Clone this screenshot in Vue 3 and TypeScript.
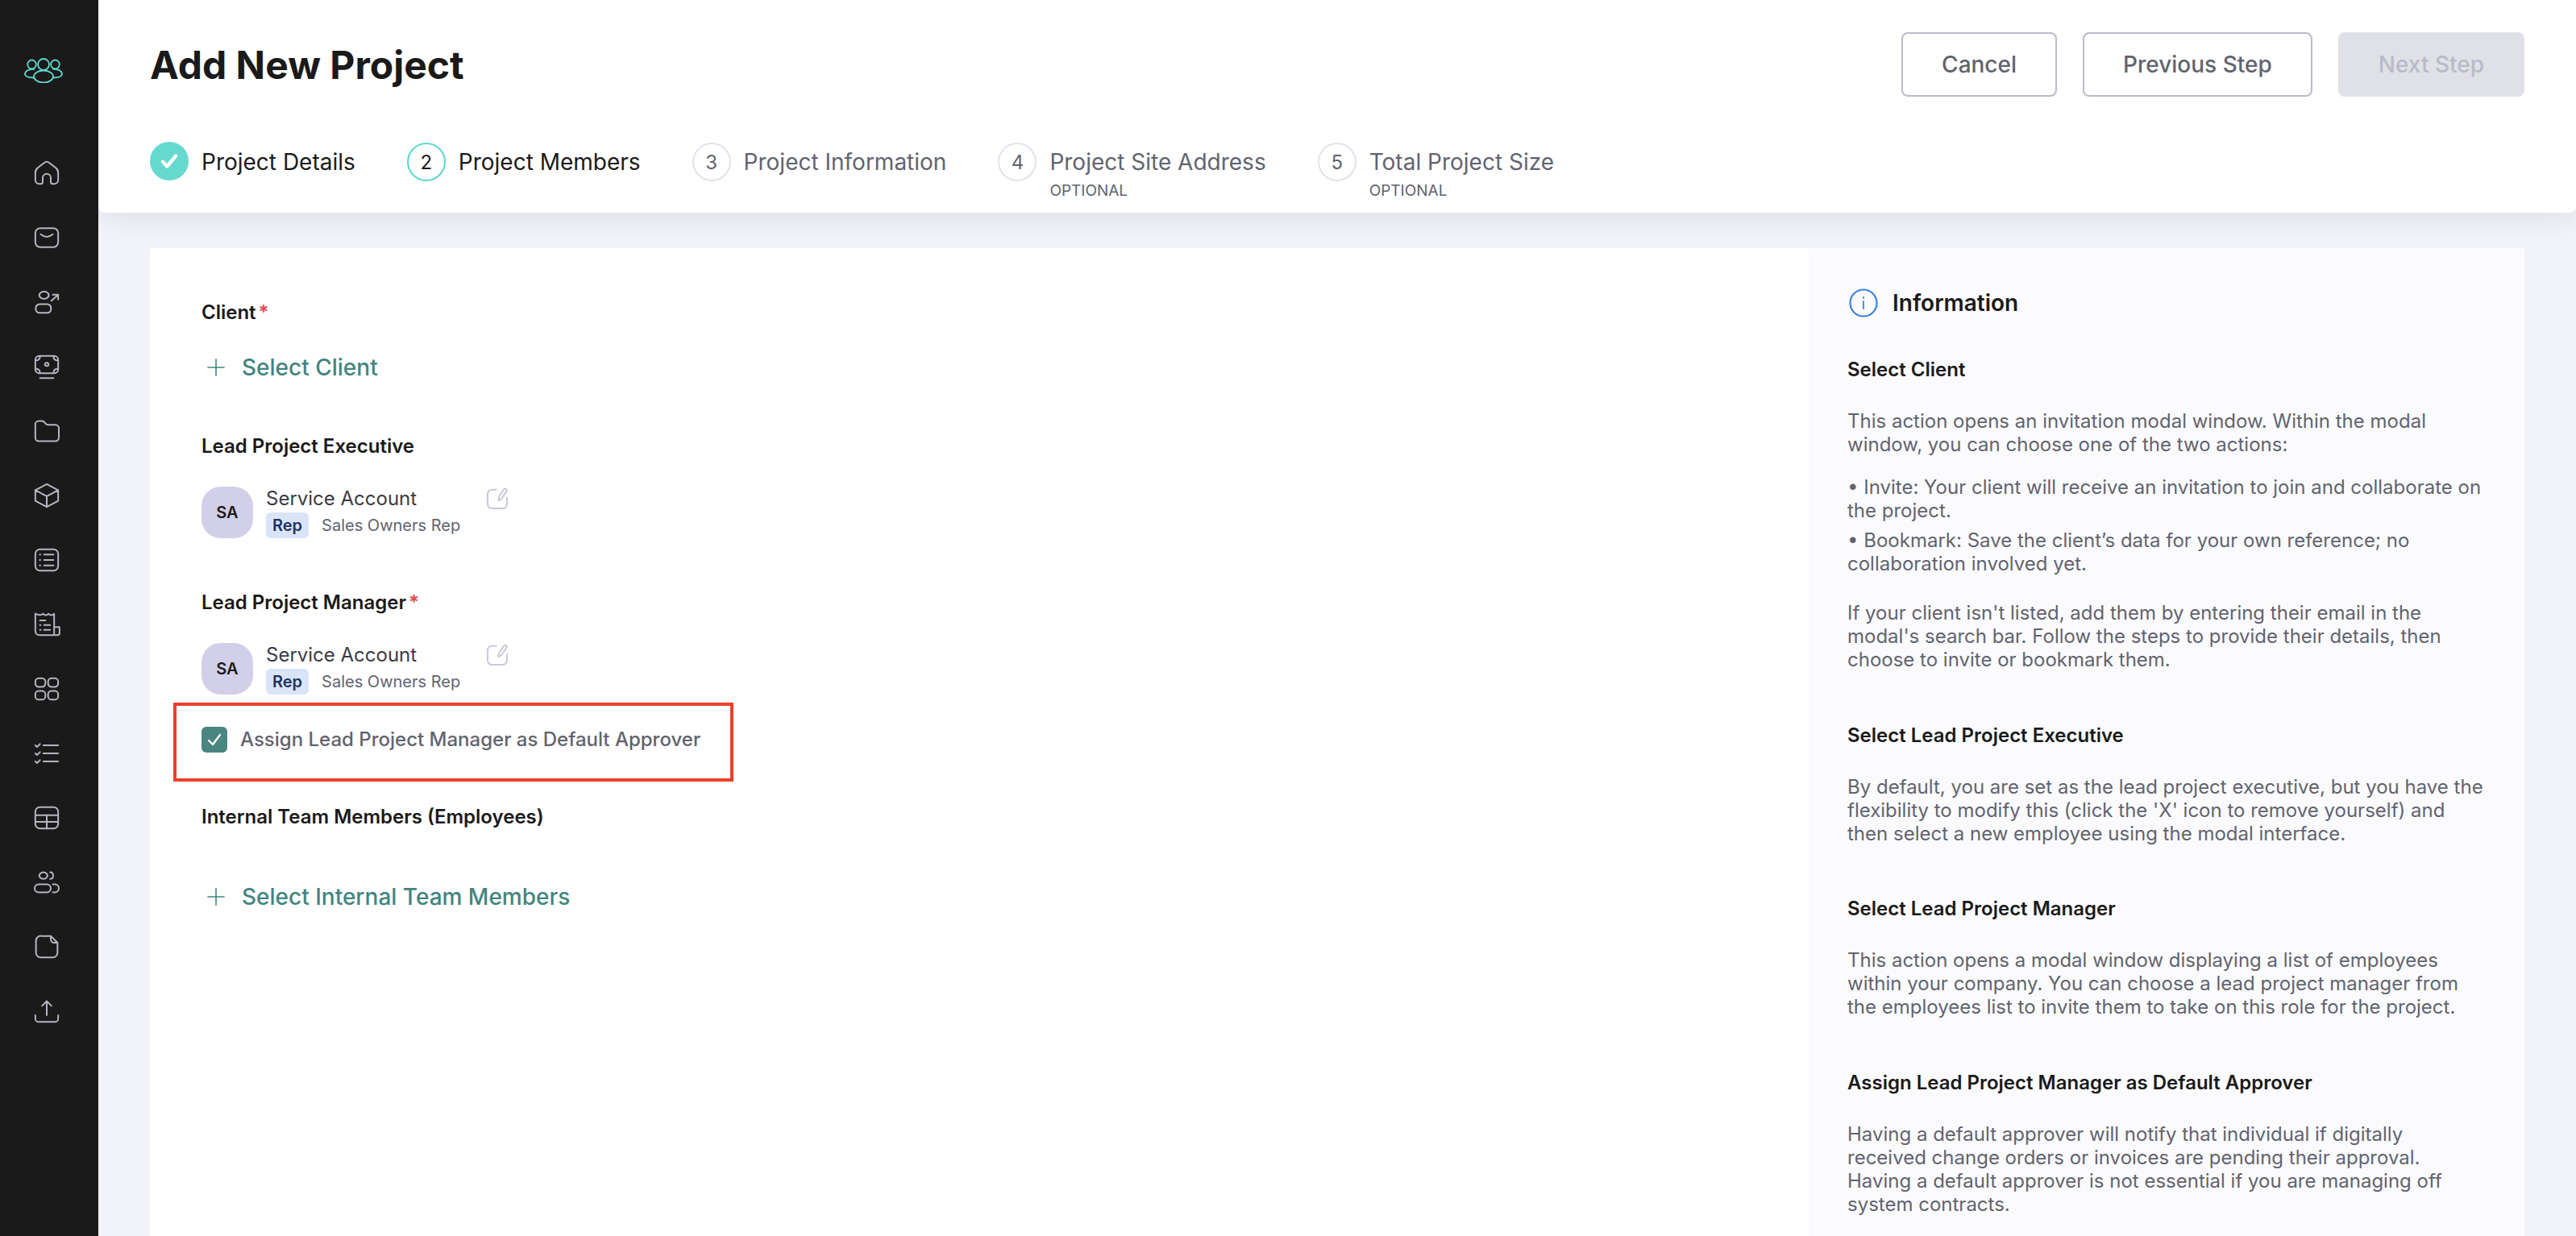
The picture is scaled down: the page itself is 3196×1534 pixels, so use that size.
<script setup lang="ts">
const navIcons: string[] = [
  'M3.500 11.500c0-1.500.6-2.600 1.800-3.500L10 4.300a3.200 3.200 0 0 1 4 0L18.700 8c1.200.9 1.800 2 1.800 3.500v5.500a3 3 0 0 1-3 3h-1A1.500 1.500 0 0 1 15 18.500v-3a3 3 0 0 0-6 0v3A1.500 1.500 0 0 1 7.500 20h-1a3 3 0 0 1-3-3z',
  'M7 5h10a3.500 3.500 0 0 1 3.500 3.500v7A3.500 3.500 0 0 1 17 19H7a3.500 3.500 0 0 1-3.500-3.500v-7A3.500 3.500 0 0 1 7 5zM7.500 9.500c3 2.500 6 2.500 9 0',
  'M10 4a3.500 2.800 0 1 0 .01 0zM6.500 13.500h6a3.300 3.300 0 0 1 0 6.500h-6a3.300 3.300 0 0 1 0-6.500zM15.500 11l5-4.500M16.500 6.500h4V10',
  'M6.500 4h11a3 3 0 0 1 3 3v7a3 3 0 0 1-3 3h-11a3 3 0 0 1-3-3V7a3 3 0 0 1 3-3zM3.500 7.500C6 7.500 7 6.500 7 4.200M20.500 7.500C18 7.500 17 6.500 17 4.200M3.500 13.500c2.500 0 3.500 1 3.500 3.300M20.500 13.500c-2.500 0-3.500 1-3.500 3.300M12 9.200a1.400 1.200 0 1 0 .01 0zM7 20.500h10',
  'M3.500 7A2.500 2.500 0 0 1 6 4.500h2.500c1 0 1.500.5 2 1.200l.7.8c.5.600 1 .8 1.800.8h5.500A2.500 2.500 0 0 1 21 9.800V17a2.500 2.500 0 0 1-2.500 2.500h-12.500A2.500 2.500 0 0 1 3.500 17z',
  'M12 3.500 20.500 8v8L12 20.500 3.500 16V8zM3.500 8 12 12.500 20.500 8M12 12.500v8',
  'M7 4h10a3.500 3.500 0 0 1 3.500 3.500v9A3.500 3.500 0 0 1 17 20H7a3.500 3.500 0 0 1-3.500-3.500v-9A3.500 3.500 0 0 1 7 4zM10 8h7M10 12h7M10 16h7M6.800 8h.4M6.800 12h.4M6.800 16h.4',
  'M17.500 20V4c-1.500 1.500-3 1.500-4.200 0-1.300 1.500-2.700 1.500-4 0-1.300 1.500-2.800 1.500-5.800 0v13a3 3 0 0 0 3 3h13.500a1.500 1.500 0 0 0 1.500-1.500V14h-3M7 9h4M7 12.500h.4M10 12.500h4.500M7 16h.4M10 16h4.500',
  'M6 4h2.500A2.500 2.500 0 0 1 11 6.500V8a2.500 2.500 0 0 1-2.500 2.500H6A2.500 2.500 0 0 1 3.500 8V6.500A2.500 2.500 0 0 1 6 4zM15.500 4H18a2.500 2.500 0 0 1 2.500 2.500V8A2.500 2.500 0 0 1 18 10.500h-2.500A2.500 2.500 0 0 1 13 8V6.500A2.500 2.500 0 0 1 15.500 4zM6 13.500h2.500A2.500 2.500 0 0 1 11 16v1.500A2.500 2.500 0 0 1 8.500 20H6a2.500 2.500 0 0 1-2.500-2.500V16A2.500 2.500 0 0 1 6 13.500zM15.500 13.500H18a2.500 2.500 0 0 1 2.500 2.500v1.500A2.500 2.500 0 0 1 18 20h-2.500a2.500 2.500 0 0 1-2.500-2.500V16a2.500 2.500 0 0 1 2.500-2.500z',
  'M9.500 6h11M9.500 12h11M9.500 18h11M3.500 6l1.300 1.200L7 5M3.500 12l1.300 1.200L7 11M3.500 18l1.300 1.200L7 17',
  'M7 4h10a3.500 3.500 0 0 1 3.500 3.500v9A3.500 3.500 0 0 1 17 20H7a3.500 3.500 0 0 1-3.500-3.500v-9A3.500 3.500 0 0 1 7 4zM3.500 10h17M3.500 15h17M12 10v10',
  'M9.500 4.500a3 2.500 0 1 0 .01 0zM14.500 4.500c3 0 3 5 0 5M6 13.500h6a3 3 0 0 1 0 6H6a3 3 0 0 1 0-6zM16.500 13.500h1.500a3 3 0 0 1 0 6h-1.500',
  'M8 4h7l5 5v7.500a3.500 3.500 0 0 1-3.500 3.500h-9A3.500 3.500 0 0 1 4 16.500v-9A3.500 3.500 0 0 1 8 4zM15 4v2.500A2.500 2.500 0 0 0 17.500 9H20',
  'M12 15V5M8.500 8 12 4.500 15.500 8M3.500 15v2.500A2.500 2.500 0 0 0 6 20h12a2.500 2.500 0 0 0 2.500-2.500V15'
]

const steps = [
  { num: 2, title: 'Project Members', sub: '', active: true },
  { num: 3, title: 'Project Information', sub: '', active: false },
  { num: 4, title: 'Project Site Address', sub: 'OPTIONAL', active: false },
  { num: 5, title: 'Total Project Size', sub: 'OPTIONAL', active: false }
]

const info = [
  {
    title: 'Select Client',
    paras: [
      { text: 'This action opens an invitation modal window. Within the modal window, you can choose one of the two actions:', after: 24 },
      { text: '• Invite: Your client will receive an invitation to join and collaborate on the project.', after: 8 },
      { text: '• Bookmark: Save the client’s data for your own reference; no collaboration involved yet.', after: 32 },
      { text: "If your client isn't listed, add them by entering their email in the modal's search bar. Follow the steps to provide their details, then choose to invite or bookmark them.", after: 0 }
    ]
  },
  {
    title: 'Select Lead Project Executive',
    paras: [
      { text: "By default, you are set as the lead project executive, but you have the flexibility to modify this (click the 'X' icon to remove yourself) and then select a new employee using the modal interface.", after: 0 }
    ]
  },
  {
    title: 'Select Lead Project Manager',
    paras: [
      { text: 'This action opens a modal window displaying a list of employees within your company. You can choose a lead project manager from the employees list to invite them to take on this role for the project.', after: 0 }
    ]
  },
  {
    title: 'Assign Lead Project Manager as Default Approver',
    paras: [
      { text: 'Having a default approver will notify that individual if digitally received change orders or invoices are pending their approval. Having a default approver is not essential if you are managing off system contracts.', after: 0 }
    ]
  }
]
</script>

<template>
  <div class="page">
    <aside class="sidebar">
      <svg class="logo" viewBox="0 0 48 32" fill="none" stroke="#5fd8cc" stroke-width="1.800">
        <circle cx="24" cy="9" r="7" />
        <ellipse cx="24" cy="24" rx="12" ry="7.500" />
        <ellipse cx="9.500" cy="9" rx="5.300" ry="5.500" />
        <ellipse cx="38.500" cy="9" rx="5.300" ry="5.500" />
        <path d="M13 14.500C6 14.500 1 17 1 21c0 3 4 4.500 12 4.500M35 14.500c7 0 12 2.500 12 6.500 0 3-4 4.500-12 4.500" />
      </svg>
      <nav class="nav">
        <svg v-for="(d, i) in navIcons" :key="i" class="nav-icon" viewBox="0 0 24 24" fill="none" stroke="#b4b6c0" stroke-width="1.200" stroke-linecap="round" stroke-linejoin="round">
          <path :d="d" />
        </svg>
      </nav>
    </aside>

    <div class="main">
      <header class="header">
        <div class="top-row">
          <h1 class="title">Add New Project</h1>
          <div class="actions">
            <button class="btn">Cancel</button>
            <button class="btn">Previous Step</button>
            <button class="btn disabled">Next Step</button>
          </div>
        </div>
        <div class="steps">
          <div class="step">
            <span class="dot done">
              <svg width="26" height="26" viewBox="0 0 24 24" fill="none" stroke="#fff" stroke-width="4" stroke-linecap="round" stroke-linejoin="round"><path d="M4.500 12.500 9.500 18 19.500 6" /></svg>
            </span>
            <span class="step-title current">Project Details</span>
          </div>
          <div v-for="s in steps" :key="s.num" class="step">
            <span class="dot" :class="{ active: s.active }">{{ s.num }}</span>
            <div class="step-text">
              <span class="step-title" :class="{ current: s.active }">{{ s.title }}</span>
              <span v-if="s.sub" class="step-sub">{{ s.sub }}</span>
            </div>
          </div>
        </div>
      </header>

      <div class="content">
        <section class="form">
          <div class="field">
            <div class="label">Client<span class="req">*</span></div>
            <a class="add">
              <svg class="plus" viewBox="0 0 24 24" fill="none" stroke="#43857f" stroke-width="1.200"><path d="M12 4v16M4 12h16" /></svg>
              Select Client
            </a>
          </div>

          <div class="field">
            <div class="label">Lead Project Executive</div>
            <div class="member">
              <div class="avatar">SA</div>
              <div class="member-info">
                <div class="member-name">Service Account</div>
                <div class="member-role"><span class="tag">Rep</span><span class="role">Sales Owners Rep</span></div>
              </div>
              <svg class="edit" viewBox="0 0 24 24" fill="none" stroke="#c9cad6" stroke-width="1.500" stroke-linecap="round" stroke-linejoin="round">
                <path d="M11 3.500H7a4 4 0 0 0-4 4V17a4 4 0 0 0 4 4h10a4 4 0 0 0 4-4v-6M13 13.500l.3-3L18 3.500a1.500 1.500 0 0 1 2.600 1.500l-4.700 7z" />
              </svg>
            </div>
          </div>

          <div class="field">
            <div class="label">Lead Project Manager<span class="req">*</span></div>
            <div class="member">
              <div class="avatar">SA</div>
              <div class="member-info">
                <div class="member-name">Service Account</div>
                <div class="member-role"><span class="tag">Rep</span><span class="role">Sales Owners Rep</span></div>
              </div>
              <svg class="edit" viewBox="0 0 24 24" fill="none" stroke="#c9cad6" stroke-width="1.500" stroke-linecap="round" stroke-linejoin="round">
                <path d="M11 3.500H7a4 4 0 0 0-4 4V17a4 4 0 0 0 4 4h10a4 4 0 0 0 4-4v-6M13 13.500l.3-3L18 3.500a1.500 1.500 0 0 1 2.600 1.500l-4.700 7z" />
              </svg>
            </div>
            <div class="approver">
              <span class="checkbox">
                <svg width="24" height="24" viewBox="0 0 24 24" fill="none" stroke="#fff" stroke-width="2.400" stroke-linecap="round" stroke-linejoin="round"><path d="M5 13 10 18 19 6" /></svg>
              </span>
              <span class="approver-text">Assign Lead Project Manager as Default Approver</span>
              <div class="highlight"></div>
            </div>
          </div>

          <div class="field team">
            <div class="label">Internal Team Members (Employees)</div>
            <a class="add">
              <svg class="plus" viewBox="0 0 24 24" fill="none" stroke="#43857f" stroke-width="1.200"><path d="M12 4v16M4 12h16" /></svg>
              Select Internal Team Members
            </a>
          </div>
        </section>

        <aside class="info">
          <div class="info-head">
            <svg width="36" height="36" viewBox="0 0 36 36" fill="none" stroke="#3b82e0" stroke-width="2.200" stroke-linecap="round">
              <circle cx="18" cy="18" r="16.500" />
              <path d="M18 16v9" stroke-width="1.800" />
              <path d="M18 11v.6" stroke-width="2.200" />
            </svg>
            <span>Information</span>
          </div>
          <div v-for="block in info" :key="block.title" class="info-block">
            <h3>{{ block.title }}</h3>
            <p v-for="(p, i) in block.paras" :key="i" :style="{ marginBottom: p.after + 'px' }">{{ p.text }}</p>
          </div>
        </aside>
      </div>
    </div>
  </div>
</template>

<style>
html, body {
  margin: 0;
  height: 100%;
  overflow: hidden;
  background: #f2f3f8;
}
</style>

<style scoped>
.page {
  display: flex;
  height: 1534px;
  overflow: hidden;
  font-family: Inter, "Liberation Sans", sans-serif;
  color: #1a1a1a;
}

.sidebar {
  width: 122px;
  flex: none;
  background: #1a1a1a;
  display: flex;
  flex-direction: column;
  align-items: flex-start;
}

.logo {
  width: 48px;
  height: 32px;
  margin: 71px 0 0 30px;
}

.nav {
  display: flex;
  flex-direction: column;
  gap: 40px;
  margin: 92px 0 0 38px;
}

.nav-icon {
  width: 40px;
  height: 40px;
  display: block;
}

.main {
  flex: 1;
  min-width: 0;
  display: flex;
  flex-direction: column;
}

.header {
  height: 264px;
  flex: none;
  background: #fff;
  padding: 0 64px;
  box-sizing: border-box;
  border-radius: 0 0 8px 8px;
  box-shadow: 0 4px 32px rgba(30, 30, 60, 0.1);
  position: relative;
}

.top-row {
  display: flex;
  align-items: center;
  justify-content: space-between;
  height: 160px;
}

.title {
  margin: 0;
  font-size: 48px;
  font-weight: 700;
}

.actions {
  display: flex;
  gap: 32px;
}

.btn {
  height: 80px;
  box-sizing: border-box;
  padding: 0 48px;
  background: #fff;
  border: 2px solid #b9bbc9;
  border-radius: 8px;
  font-family: inherit;
  font-size: 28px;
  font-weight: 500;
  color: #62636e;
}

.btn.disabled {
  background: #e0e1e7;
  border-color: #e0e1e7;
  color: #b9bbc9;
}

.steps {
  display: flex;
  gap: 64px;
  margin-top: 17px;
}

.step {
  display: flex;
  gap: 16px;
}

.dot {
  width: 48px;
  height: 48px;
  box-sizing: border-box;
  flex: none;
  border-radius: 50%;
  border: 2px solid #e2e3ea;
  display: flex;
  align-items: center;
  justify-content: center;
  font-size: 24px;
  color: #62636e;
}

.dot.active {
  border-color: #5fd8cc;
  color: #1a1a1a;
}

.dot.done {
  background: #66d9cf;
  border-color: #66d9cf;
  margin-top: -1px;
}

.step-text {
  display: flex;
  flex-direction: column;
}

.step-title {
  font-size: 28px;
  line-height: 48px;
  color: #62636e;
  white-space: nowrap;
}

.step-title.current {
  color: #1a1a1a;
}

.step-sub {
  font-size: 19px;
  line-height: 24px;
  color: #62636e;
}

.content {
  flex: 1;
  min-height: 0;
  display: flex;
  padding: 44px 64px 0;
}

.form {
  flex: 1;
  min-width: 0;
  background: #fff;
  padding: 64px 64px 0;
}

.field {
  margin-bottom: 64px;
}

.label {
  font-size: 24px;
  font-weight: 600;
  line-height: 32px;
}

.req {
  color: #e5484d;
  margin-left: 3px;
}

.add {
  display: flex;
  align-items: center;
  gap: 16px;
  margin-top: 34px;
  font-size: 28px;
  font-weight: 500;
  color: #43857f;
  line-height: 36px;
}

.plus {
  width: 32px;
  height: 32px;
  margin-left: 2px;
}

.member {
  display: flex;
  align-items: flex-start;
  margin-top: 34px;
}

.avatar {
  width: 64px;
  height: 64px;
  border-radius: 24px;
  background: #d2cfe8;
  display: flex;
  align-items: center;
  justify-content: center;
  font-size: 20px;
  font-weight: 600;
  flex: none;
}

.member-info {
  margin-left: 16px;
  width: 271px;
}

.member-name {
  font-size: 24px;
  line-height: 30px;
  margin-bottom: 2px;
  color: #3a3a44;
}

.member-role {
  display: flex;
  align-items: center;
  gap: 16px;
}

.tag {
  background: #d9e5f7;
  color: #1d3461;
  font-size: 20px;
  font-weight: 600;
  padding: 0 8px;
  line-height: 32px;
  border-radius: 6px;
}

.role {
  font-size: 20px;
  color: #62636e;
}

.edit {
  width: 32px;
  height: 32px;
  margin-top: -1px;
}

.approver {
  position: relative;
  display: flex;
  align-items: center;
  gap: 16px;
  margin-top: 40px;
  height: 32px;
}

.checkbox {
  width: 32px;
  height: 32px;
  border-radius: 6px;
  background: #4a8580;
  display: flex;
  align-items: center;
  justify-content: center;
}

.approver-text {
  font-size: 24px;
  font-weight: 500;
  padding-bottom: 2px;
  color: #62636e;
}

.highlight {
  position: absolute;
  left: -35px;
  top: -30px;
  width: 695px;
  height: 98px;
  box-sizing: border-box;
  border: 4px solid #e9412a;
}

.team .add {
  margin-top: 65px;
}

.info {
  width: 888px;
  flex: none;
  box-sizing: border-box;
  background: #fbfbfd;
  padding: 50px 48px 0;
}

.info-head {
  display: flex;
  align-items: center;
  gap: 18px;
  height: 36px;
  margin: 0 0 49px 2px;
  font-size: 28px;
  font-weight: 600;
}

.info-block {
  margin-bottom: 63.6px;
}

.info-block h3 {
  margin: 0 0 33px;
  font-size: 24px;
  font-weight: 600;
  line-height: 32px;
}

.info-block p {
  margin: 0;
  font-size: 24px;
  line-height: 29px;
  color: #62636e;
}
</style>
